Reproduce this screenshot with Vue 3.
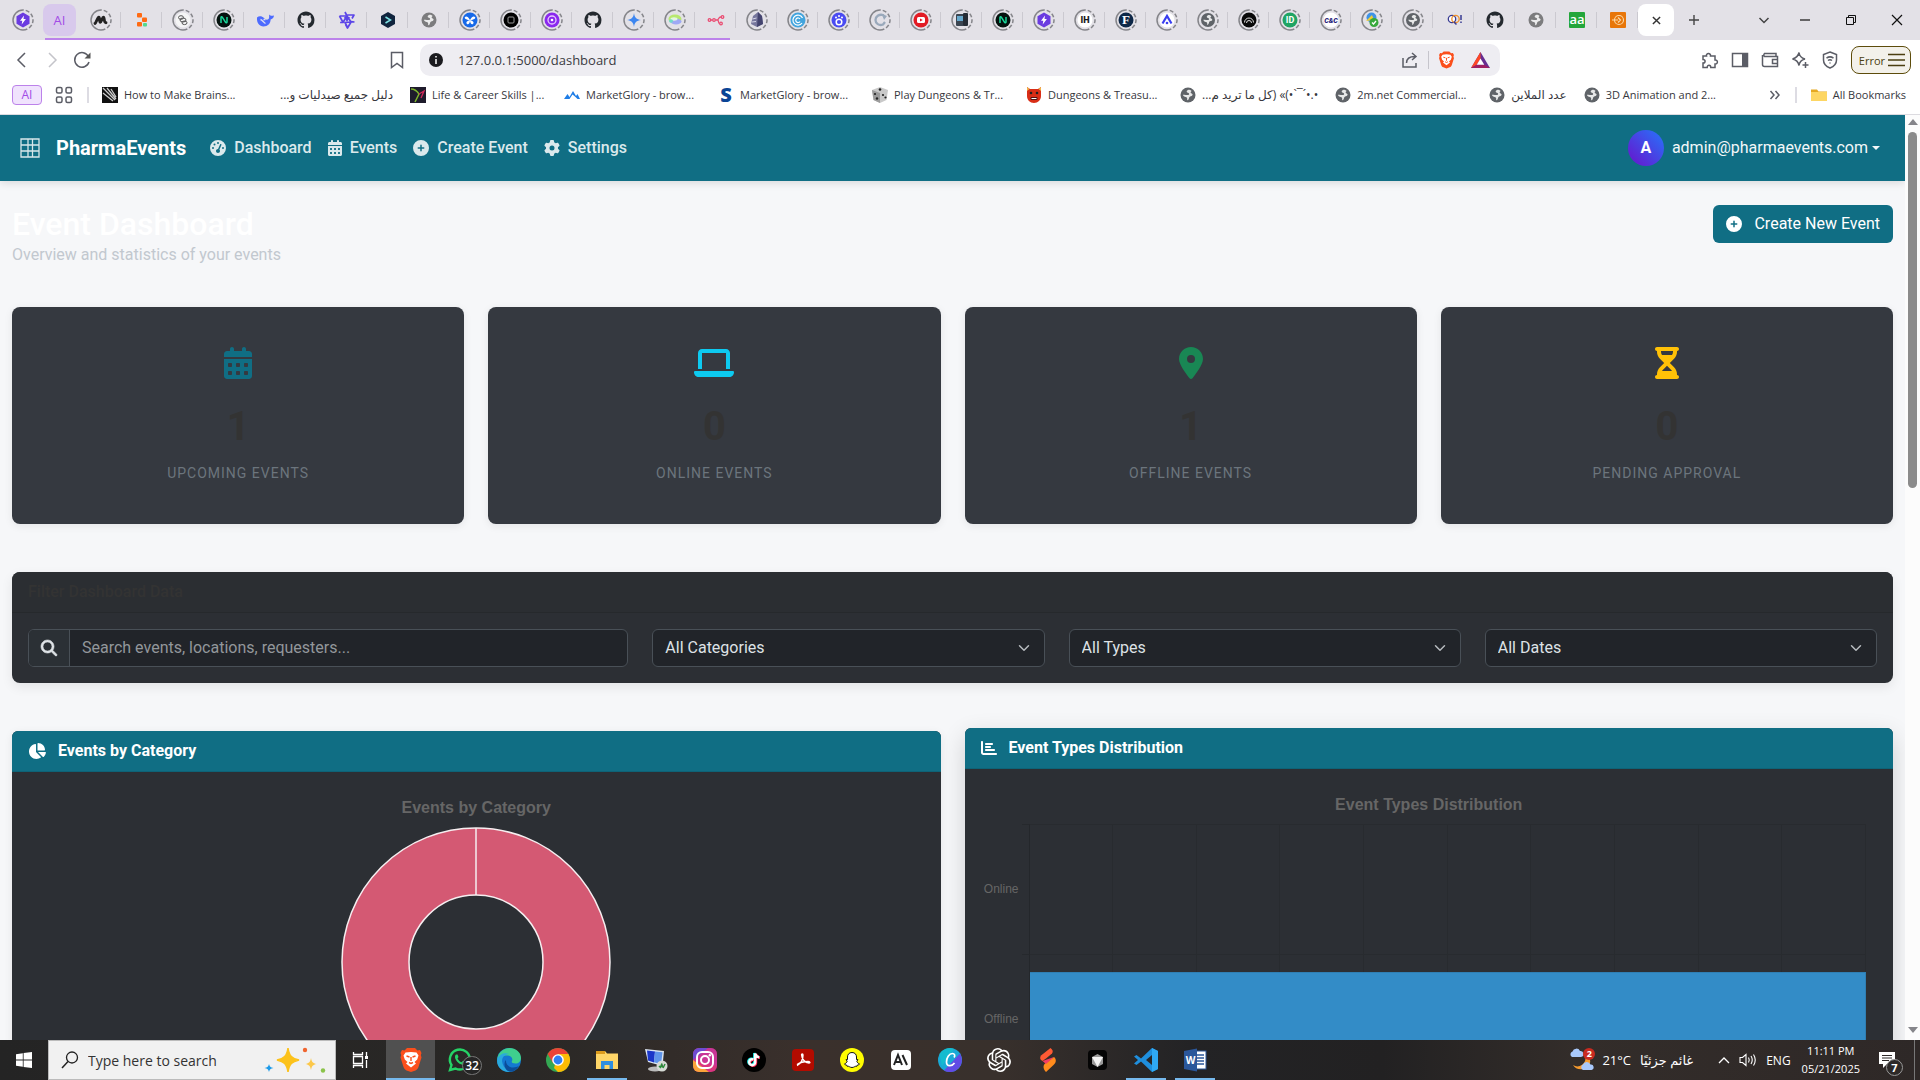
<script setup>
import { ref } from 'vue'

const github = '<path transform="translate(3.5 3.5) scale(1.06)" fill="#24292f" d="M8 0C3.58 0 0 3.58 0 8c0 3.54 2.29 6.53 5.47 7.59.4.07.55-.17.55-.38 0-.19-.01-.82-.01-1.49-2.01.37-2.53-.49-2.69-.94-.09-.23-.48-.94-.82-1.13-.28-.15-.68-.52-.01-.53.63-.01 1.08.58 1.23.82.72 1.21 1.87.87 2.33.66.07-.52.28-.87.51-1.07-1.78-.2-3.64-.89-3.64-3.95 0-.87.31-1.59.82-2.15-.08-.2-.36-1.02.08-2.12 0 0 .67-.21 2.2.82.64-.18 1.32-.27 2-.27s1.36.09 2 .27c1.53-1.04 2.2-.82 2.2-.82.44 1.1.16 1.92.08 2.12.51.56.82 1.27.82 2.15 0 3.07-1.87 3.75-3.65 3.95.29.25.54.73.54 1.48 0 1.07-.01 1.93-.01 2.2 0 .21.15.46.55.38A8.01 8.01 0 0 0 16 8c0-4.42-3.58-8-8-8z"/>'
const globeOf = (c, r) => `<circle cx="12" cy="12" r="${r}" fill="${c}"/><path transform="translate(12 12) scale(${r / 8.2}) translate(-12 -12)" d="M12.5 6.2c-1.5.6-2.3 1.5-1.8 2.6.5.9 2 .7 2.500 1.700.3.900-.5 1.500-1.700 1.500-1.500 0-3.200-.7-5-.2.2 1.500 1.600 2.300 3 2.500 1.200.2 1.700 1 1.600 2.100l-.1 1.400c1.800-.3 2-1.900 2.300-3.100.3-1.100 1.500-1.400 2.700-1.700.9-.3 1.300-1.200.8-2-.6-.8-1.700-.7-1.900-1.700-.1-.8.600-1.200 1.100-1.700-.9-.9-2.200-1.400-3.500-1.400z" fill="#fff" opacity=".85"/>`
const globe = globeOf('#7c7c7e', 7.5)
const globeRing = globeOf('#5f6368', 7)
const globeMark = globeOf('#5f6368', 7.5)
const nuxt = '<circle cx="12" cy="12" r="7.5" fill="#04120e"/><path d="M9 15V9.500c0-.8.900-1 1.300-.4l3.300 5.300c.4.700 1.400.4 1.400-.4V9" fill="none" stroke="#19d89b" stroke-width="1.5"/>'
const bolt = '<path d="M12 4.500l6.500 3.700v7.600L12 19.500l-6.500-3.700V8.200z" fill="#6a3be0"/><path d="M13 7.500l-4 5.300h2.300l-.6 3.700 4.200-5.400h-2.400z" fill="#fff"/>'

const tabIcons = [
  { ring: 1, svg: '<path d="M6 15.500c1.300-.3 2.300-6.300 3.900-6.300 1.200 0 .2 5 1.400 5s1.900-5 3.100-5c1.300 0 .3 5.500 2.600 5.500" fill="none" stroke="#222" stroke-width="2.900" stroke-linecap="round"/>' },
  { svg: '<g><rect x="7" y="5" width="5" height="4.5" rx="1" fill="#ff6a13"/><rect x="12" y="9.5" width="5" height="4.5" rx="1" fill="#ff6a13"/><rect x="7" y="14" width="5" height="4.5" rx="1" fill="#ff6a13"/><rect x="13" y="15" width="4" height="3.5" rx="1" fill="#55d98d"/></g>' },
  { ring: 1, svg: '<circle cx="12" cy="12" r="7.5" fill="#f5f5f5"/><g fill="none" stroke="#555" stroke-width="1"><ellipse cx="10" cy="9.500" rx="2.500" ry="1.800"/><ellipse cx="12" cy="12" rx="3" ry="2"/><ellipse cx="13.500" cy="14.800" rx="2.500" ry="1.800"/></g>' },
  { ring: 1, svg: nuxt },
  { svg: '<path d="M4 9.500c2-2 5-1.500 7 .5 1.500 1.500 3 2.500 4.500 1 1-1 .5-2.700.7-4.500 1.200 1.500 2.500 1.500 4.800 1-.3 2.500-1.800 3.700-3.400 4 0 3.800-2.800 7-7.100 7C6.500 18.500 3.500 15 4 9.500z" fill="#4d6bfe"/><path d="M7.500 11.500c2 .5 3 3 5 4M10.500 11.500h2" stroke="#dcdff5" stroke-width="1.3" fill="none"/>' },
  { svg: github },
  { svg: '<g fill="none" stroke="#5b45e8" stroke-width="1.700" stroke-linejoin="round"><path d="M10 4l1.500 3H19l-2 3.500M19.500 14l-3.300-.3-3.700 6.300-1.900-3.300M4.500 8h7.300M4.500 8l3.600 6.500h-3M8 14.500l3.800-6.500M12 8l4 6M16 14l-6 .5 2 4"/></g><path d="M9 9h6l-3 5z" fill="#5b45e8"/>' },
  { svg: '<path d="M12 4l7 4v8l-7 4-7-4V8z" fill="#10243e"/><path d="M9.500 9l5 3-5 3" fill="none" stroke="#7fe3e6" stroke-width="1.500"/>' },
  { svg: globe },
  { ring: 1, svg: '<circle cx="12" cy="12" r="7.5" fill="#1769e8"/><path d="M12 12C10 8 8 8 7 9s1 3 5 3zm0 0c2-4 4-4 5-3s-1 3-5 3zm0 0c-4 1-4 3-3 4s3 0 3-4zm0 0c4 1 4 3 3 4s-3 0-3-4z" fill="#fff"/>' },
  { ring: 1, svg: '<circle cx="12" cy="12" r="7.5" fill="#000"/><rect x="9" y="9" width="6" height="6" rx="1" fill="none" stroke="#999" stroke-width="1"/>' },
  { ring: 1, svg: '<circle cx="12" cy="12" r="7.5" fill="#8a28ee"/><circle cx="12" cy="12" r="4" fill="none" stroke="#e7c8ff" stroke-width="1.300"/><circle cx="12" cy="12" r="1.300" fill="#fff"/>' },
  { svg: github },
  { ring: 1, svg: '<path d="M12 5c.5 4.500 2.500 6.500 7 7-4.500.5-6.500 2.500-7 7-.5-4.500-2.500-6.500-7-7 4.500-.5 6.500-2.500 7-7z" fill="#3d86f0"/>' },
  { ring: 1, svg: '<ellipse cx="12" cy="11" rx="6.5" ry="4.5" fill="#b8e86f"/><ellipse cx="13" cy="13.5" rx="5.5" ry="3" fill="#9fa9f5"/><ellipse cx="11" cy="11" rx="3.5" ry="1.7" fill="#e4f6e0"/><ellipse cx="8" cy="13" rx="2" ry="1.8" fill="#6fdcc9"/>' },
  { svg: '<g fill="none" stroke="#ea4b71" stroke-width="1.300"><circle cx="5.500" cy="12" r="1.300"/><circle cx="10" cy="12" r="1.300"/><circle cx="18.500" cy="9" r="1.300"/><circle cx="17" cy="15.500" r="1.300"/><path d="M7 12h1.500M11.500 12h1.500c2 0 1-3 4-3M13.500 12c1.500 0 .5 3.500 2 3.500"/></g>' },
  { ring: 1, svg: '<path d="M6 16l2-8 5-4 4 4 1 8-6 3z" fill="#77779d"/><path d="M13 4l4 4 1 8-6 3z" fill="#44446f"/><path d="M7.500 11l4-1M7 14l4-.5" stroke="#d5d5e8"/>' },
  { ring: 1, svg: '<circle cx="12" cy="12" r="7.5" fill="#42a4dd"/><path d="M16.500 10A5 5 0 1 0 16 15M14 11a2.300 2.300 0 1 0 0 2.500" fill="none" stroke="#fff" stroke-width="1.200"/>' },
  { ring: 1, svg: '<circle cx="12" cy="12" r="7.5" fill="#4a4bf2"/><circle cx="12" cy="14" r="2.800" fill="none" stroke="#fff" stroke-width="1.500"/><g fill="#fff"><circle cx="9" cy="9.500" r="1"/><circle cx="12" cy="8" r="1"/><circle cx="15" cy="9.500" r="1"/></g>' },
  { ring: 1, svg: '<path d="M17 9.500l-2-2.500c-4-1-7.500 1.500-7.500 5s3.500 6 7.500 4.500l2-2.500" fill="none" stroke="#9aa9bb" stroke-width="2.300"/><path d="M14 6l5 2-3 4z" fill="#9aa9bb"/>' },
  { ring: 1, svg: '<circle cx="12" cy="12" r="7.5" fill="#e21b24"/><rect x="8" y="9" width="8" height="6" rx="1.5" fill="#fff"/><path d="M11 10.500l2.800 1.500-2.800 1.500z" fill="#e21b24"/>' },
  { ring: 1, svg: '<rect x="6" y="6" width="8" height="12" rx="1" fill="#3b4551"/><rect x="13" y="5" width="5" height="13" rx="1" fill="#252c35"/><rect x="7" y="8" width="6" height="5" fill="#67a9cd"/>' },
  { ring: 1, svg: nuxt },
  { ring: 1, svg: bolt },
  { ring: 1, svg: '<circle cx="12" cy="12" r="7.5" fill="#fff"/><text x="12" y="15" text-anchor="middle" font-family="Roboto, sans-serif" font-weight="900" font-size="9" fill="#1c1c1c">IH</text>' },
  { ring: 1, svg: '<circle cx="12" cy="12" r="7.5" fill="#0d2747"/><text x="12" y="16" text-anchor="middle" font-family="Liberation Serif, serif" font-weight="700" font-size="13" fill="#fff">F</text>' },
  { ring: 1, svg: '<circle cx="12" cy="12" r="7.5" fill="#fff"/><path d="M7.500 15.500L12 8l4.500 7.500" fill="none" stroke="#3a3ff0" stroke-width="2.200"/><circle cx="12" cy="15" r="1.300" fill="#3a3ff0"/>' },
  { ring: 1, svg: globeRing },
  { ring: 1, svg: '<circle cx="12" cy="12" r="7.5" fill="#0a0a0a"/><path d="M7.500 14.500a4.500 4.500 0 0 1 9 0M9.500 15a2.500 2.500 0 0 1 5 0" fill="none" stroke="#ddd" stroke-width="1"/>' },
  { ring: 1, svg: '<circle cx="12" cy="12" r="7.5" fill="#1fa463"/><text x="12" y="15" text-anchor="middle" font-family="Roboto, sans-serif" font-weight="700" font-size="9" fill="#fff">ID</text>' },
  { ring: 1, svg: '<circle cx="12" cy="12" r="7.5" fill="#fff"/><text x="12" y="14.5" text-anchor="middle" font-family="Roboto, sans-serif" font-style="italic" font-weight="900" font-size="7" fill="#27217a">C&amp;C</text>' },
  { ring: 1, svg: '<circle cx="11.500" cy="9.500" r="5" fill="#3f93e6"/><path d="M6 13l6-6 2 5z" fill="#f3cf32"/><circle cx="14" cy="14.500" r="4.500" fill="#37a93c"/><path d="M12 14.500l1.500 1.500 2.500-3" fill="none" stroke="#fff" stroke-width="1.300"/>' },
  { ring: 1, svg: globeRing },
  { svg: '<circle cx="10" cy="11" r="3.700" fill="#fff" stroke="#383b93" stroke-width="1.300"/><circle cx="13.500" cy="11" r="3.700" fill="none" stroke="#f0912c" stroke-width="1.300"/><path d="M12 14l2.500 2.500" stroke="#383b93" stroke-width="1.500"/><path d="M19 7v5M19 13.500v1.500" stroke="#383b93" stroke-width="1.500"/>' },
  { svg: github },
  { svg: globe },
  { svg: '<rect x="4" y="4" width="16" height="16" rx="1" fill="#23a63b"/><text x="12" y="16" text-anchor="middle" font-family="Open Sans, sans-serif" font-weight="600" font-size="13" fill="#fff">aa</text>' },
  { svg: '<rect x="4" y="4" width="16" height="16" rx="1" fill="#e87609"/><circle cx="13" cy="12" r="4.500" fill="none" stroke="#fbd9a7" stroke-width="1.100"/><path d="M6 12h6M12 9.500l2.500 2.500-2.500 2.500" fill="none" stroke="#fbd9a7" stroke-width="1.200"/>' }
]
const groupTabs = tabIcons.slice(0, 16)
const restTabs = tabIcons.slice(16)

const bookmarks = [
  { t: 'How to Make Brains...', svg: '<rect x="4" y="4" width="16" height="16" fill="#111"/><path d="M5 5l12 12M9 5l9 11M5 10l10 8M13 6l5 8" stroke="#ccc" stroke-width="1.300"/>' },
  { t: 'دليل جميع صيدليات و...', rtl: 1, svg: '' },
  { t: 'Life & Career Skills |...', svg: '<rect x="4" y="4" width="16" height="16" fill="#1e1b2b"/><path d="M5 6c4 0 6 2 8 5l-4 8" fill="none" stroke="#7db52c" stroke-width="1.500"/><path d="M13 11l5-3-3 7" fill="none" stroke="#d1295a" stroke-width="1.300"/>' },
  { t: 'MarketGlory - brow...', svg: '<path d="M4 16l3.500-5 2 3L13 8l3 5 1.500-2L20 16h-2.500l-2-2-3-2.500-3 4.500z" fill="#1f7de6"/>' },
  { t: 'MarketGlory - brow...', svg: '<text x="12" y="19" text-anchor="middle" font-family="Open Sans, sans-serif" font-weight="800" font-size="20" fill="#0b4495">S</text>' },
  { t: 'Play Dungeons & Tr...', svg: '<path d="M4 7l8-3 8 3-1.500 10L12 20l-6.500-3z" fill="#c9c9c9"/><path d="M4 7l8 3v10l-6.500-3z" fill="#9b9b9b"/><g fill="#222"><circle cx="12" cy="6.500" r="1.300"/><circle cx="7" cy="11" r="1.100"/><circle cx="9" cy="15.500" r="1.200"/><circle cx="15" cy="12" r="1.100"/><circle cx="17.500" cy="14.500" r="1.100"/></g>' },
  { t: 'Dungeons & Treasu...', svg: '<path d="M5 4l3 2h8l3-2v9c0 4-3 7-7 7s-7-3-7-7z" fill="#d92e17"/><path d="M5 4l2.500 2L5 8zM19 4l-2.500 2L19 8z" fill="#f0b64b"/><circle cx="9" cy="10" r="1.300" fill="#222"/><circle cx="15" cy="10" r="1.300" fill="#222"/><path d="M9 14.500h6v2H9z" fill="#fff" stroke="#551010"/>' },
  { t: '•.•´¯`•)» (كل ما تريد م...', rtl: 1, svg: globeMark },
  { t: '2m.net Commercial...', svg: globeMark },
  { t: 'عدد الملاين', rtl: 1, short: 1, svg: globeMark },
  { t: '3D Animation and 2...', svg: globeMark }
]

const calendar = { box: '0 0 448 512', d: 'M128 0c17.7 0 32 14.3 32 32V64H288V32c0-17.7 14.3-32 32-32s32 14.3 32 32V64h48c26.5 0 48 21.5 48 48v48H0V112C0 85.5 21.5 64 48 64H96V32c0-17.7 14.3-32 32-32zM0 192H448V464c0 26.5-21.5 48-48 48H48c-26.5 0-48-21.5-48-48V192zm64 80v32c0 8.8 7.2 16 16 16h32c8.8 0 16-7.2 16-16V272c0-8.8-7.2-16-16-16H80c-8.8 0-16 7.2-16 16zm128 0v32c0 8.8 7.2 16 16 16h32c8.8 0 16-7.2 16-16V272c0-8.8-7.2-16-16-16H208c-8.8 0-16 7.2-16 16zm144-16c-8.8 0-16 7.2-16 16v32c0 8.8 7.2 16 16 16h32c8.8 0 16-7.2 16-16V272c0-8.8-7.2-16-16-16H336zM64 400v32c0 8.8 7.2 16 16 16h32c8.8 0 16-7.2 16-16V400c0-8.8-7.2-16-16-16H80c-8.8 0-16 7.2-16 16zm144-16c-8.8 0-16 7.2-16 16v32c0 8.8 7.2 16 16 16h32c8.8 0 16-7.2 16-16V400c0-8.8-7.2-16-16-16H208zm112 16v32c0 8.8 7.2 16 16 16h32c8.8 0 16-7.2 16-16V400c0-8.8-7.2-16-16-16H336c-8.8 0-16 7.2-16 16z' }
const plus = { box: '0 0 512 512', d: 'M256 512A256 256 0 1 0 256 0a256 256 0 1 0 0 512zM232 344V280H168c-13.3 0-24-10.7-24-24s10.7-24 24-24h64V168c0-13.3 10.7-24 24-24s24 10.7 24 24v64h64c13.3 0 24 10.7 24 24s-10.7 24-24 24H280v64c0 13.3-10.7 24-24 24s-24-10.7-24-24z' }
const gauge = { box: '0 0 512 512', d: 'M0 256a256 256 0 1 1 512 0A256 256 0 1 1 0 256zM288 96a32 32 0 1 0-64 0 32 32 0 1 0 64 0zM256 416c35.3 0 64-28.7 64-64 0-17.4-6.9-33.1-18.1-44.6L366 161.7c5.3-12.1-.2-26.3-12.3-31.6s-26.3.2-31.6 12.3L257.9 288H256c-35.3 0-64 28.7-64 64s28.7 64 64 64zM176 144a32 32 0 1 0-64 0 32 32 0 1 0 64 0zM96 288a32 32 0 1 0 0-64 32 32 0 1 0 0 64zm352-32a32 32 0 1 0-64 0 32 32 0 1 0 64 0z' }
const gear = { box: '0 0 512 512', d: 'M495.9 166.6c3.2 8.7 .5 18.4-6.4 24.6l-43.3 39.4c1.1 8.3 1.7 16.8 1.7 25.4s-.6 17.1-1.7 25.4l43.3 39.4c6.9 6.2 9.6 15.9 6.4 24.6c-4.4 11.9-9.7 23.3-15.8 34.3l-4.7 8.1c-6.6 11-14 21.4-22.1 31.2c-5.9 7.2-15.7 9.6-24.5 6.8l-55.7-17.7c-13.4 10.3-28.2 18.9-44 25.4l-12.5 57.1c-2 9.1-9 16.3-18.2 17.8c-13.8 2.3-28 3.5-42.5 3.5s-28.7-1.2-42.5-3.5c-9.2-1.5-16.2-8.7-18.2-17.8l-12.5-57.1c-15.8-6.5-30.6-15.1-44-25.4L83.1 425.9c-8.8 2.8-18.6 .3-24.5-6.8c-8.1-9.8-15.5-20.2-22.1-31.2l-4.7-8.1c-6.1-11-11.4-22.4-15.8-34.3c-3.2-8.7-.5-18.4 6.4-24.6l43.3-39.4C64.6 273.1 64 264.6 64 256s.6-17.1 1.7-25.4L22.4 191.2c-6.9-6.2-9.6-15.9-6.4-24.6c4.4-11.9 9.7-23.3 15.8-34.3l4.7-8.1c6.6-11 14-21.4 22.1-31.2c5.9-7.2 15.7-9.6 24.5-6.8l55.7 17.7c13.4-10.3 28.2-18.9 44-25.4l12.5-57.1c2-9.1 9-16.3 18.2-17.8C227.3 1.2 241.5 0 256 0s28.7 1.2 42.5 3.5c9.2 1.5 16.2 8.7 18.2 17.8l12.5 57.1c15.8 6.5 30.6 15.1 44 25.4l55.7-17.7c8.8-2.8 18.6-.3 24.5 6.8c8.1 9.8 15.5 20.2 22.1 31.2l4.7 8.1c6.1 11 11.4 22.4 15.8 34.3zM256 336a80 80 0 1 0 0-160 80 80 0 1 0 0 160z' }

const navLinks = [
  { t: 'Dashboard', ...gauge },
  { t: 'Events', ...calendar },
  { t: 'Create Event', ...plus },
  { t: 'Settings', ...gear }
]

const stats = [
  { n: 1, t: 'Upcoming Events', c: '#106e84', ...calendar },
  { n: 0, t: 'Online Events', c: '#0dcaf0', box: '0 0 640 512', d: 'M128 32C92.7 32 64 60.7 64 96V352h64V96H512V352h64V96c0-35.3-28.7-64-64-64H128zM19.2 384C8.6 384 0 392.6 0 403.2C0 445.6 34.4 480 76.8 480H563.2c42.4 0 76.8-34.4 76.8-76.8c0-10.6-8.6-19.2-19.2-19.2H19.2z' },
  { n: 1, t: 'Offline Events', c: '#198754', box: '0 0 384 512', d: 'M215.7 499.2C267 435 384 279.4 384 192C384 86 298 0 192 0S0 86 0 192c0 87.4 117 243 168.3 307.2c12.3 15.3 35.1 15.3 47.4 0zM192 128a64 64 0 1 1 0 128 64 64 0 1 1 0-128z' },
  { n: 0, t: 'Pending Approval', c: '#ffc107', box: '0 0 384 512', d: 'M32 0C14.3 0 0 14.3 0 32S14.3 64 32 64V75c0 42.4 16.9 83.1 46.9 113.1L146.7 256 78.9 323.9C48.9 353.9 32 394.6 32 437v11c-17.7 0-32 14.3-32 32s14.3 32 32 32H64 320h32c17.7 0 32-14.3 32-32s-14.3-32-32-32V437c0-42.4-16.9-83.1-46.9-113.1L237.3 256l67.9-67.9c30-30 46.9-70.7 46.9-113.1V64c17.7 0 32-14.3 32-32s-14.3-32-32-32H320 64 32zM96 75V64H288V75c0 19-5.6 37.4-16 53H112c-10.3-15.6-16-34-16-53zm16 309c3.5-5.3 7.6-10.3 12.1-14.9L192 301.3l67.9 67.9c4.6 4.6 8.6 9.6 12.1 14.9H112z' }
]

const filters = [
  { id: 'category', t: 'All Categories', label: 'Category' },
  { id: 'type', t: 'All Types', label: 'Type' },
  { id: 'date', t: 'All Dates', label: 'Date' }
]

const braveLion = '<path d="M8 0h8l2.500 2.500L21 2l1.500 3-.7 2 .7 2.500-3 9.500c-.5 1.600-1.500 2.500-3 3.400L12 24l-4.500-1.600c-1.500-.9-2.500-1.800-3-3.400l-3-9.500.7-2.500-.7-2L3 2l2.500.5z" fill="#fb4f1c"/><path d="M12 4l5.500.5 2 3-1.300 4-2.700 2.500 1.500 1.500L12 19.500 7 15.500 8.500 14 5.800 11.500l-1.300-4 2-3z" fill="#fff"/><path d="M7.500 8l3 1M16.500 8l-3 1M12 9v4M10 14.500l2 1 2-1" stroke="#fb4f1c" stroke-width="1.400" fill="none"/>'

const apps = [
  { name: 'Brave', on: 'full', svg: braveLion },
  { name: 'WhatsApp', badge: '32', svg: '<path d="M2 22l1.500-5A10 10 0 1 1 7.500 20.500z" fill="none" stroke="#25d366" stroke-width="2.400"/><path d="M8 6.500l1.500 0 1 2.500-1 1.500c1 2 2.500 3.200 4 3.800l1.500-1.500 2.500 1.200c0 2-1.500 3-3 2.800C10.500 16 7 12 7 9c0-1 .4-2 1-2.500z" fill="#25d366"/>' },
  { name: 'Edge', svg: '<circle cx="12" cy="12" r="12" fill="#1479d1"/><path d="M.2 11C1.500 4 6.500 0 12.500 0 19 0 24 4.500 24 10c0 3.500-2.500 5.500-5.500 5.500-3 0-4.500-1-3.500-2.500 1-2-.2-5-4-5.500C6.500 7 2.500 8.500.2 11z" fill="#3fcf8e"/><path d="M.2 11C2.500 5.500 8 4 12 6c-5 .5-7.500 4-6.800 8C6 19 10 23 15 23.500 7 25.500-1 20 .2 11z" fill="#2aa9dd"/><path d="M9 12c-.5 4 2.500 7.500 7 7.500 2.500 0 4.500-.7 6-1.700-2 3.700-5 5.700-8.500 6C7.500 23 6 15 9 12z" fill="#0c4d98"/>' },
  { name: 'Chrome', svg: '<circle cx="12" cy="12" r="12" fill="#34a853"/><path d="M12 12l10.400-6A12 12 0 0 1 12 24z" fill="#fbbc05"/><path d="M12 6h10.400l-5 9L12 24 8 20z" fill="#fbbc05"/><path d="M1.600 6A12 12 0 0 1 22.400 6H12l-5 9z" fill="#ea4335"/><circle cx="12" cy="12" r="5.800" fill="#fff"/><circle cx="12" cy="12" r="4.400" fill="#2d7ff3"/>' },
  { name: 'File Explorer', on: 'part', svg: '<path d="M1 3h9l2 2.500h11V21H1z" fill="#ffd668"/><path d="M1 3h9v3H1z" fill="#dd9c1d"/><path d="M6 13h12v8h-3.500v-4h-5v4H6z" fill="#2f8ee0"/>' },
  { name: 'Remote Desktop', svg: '<path d="M1 1l19 2-1.500 15L4 14z" fill="#dce5f2"/><path d="M3 2.500l8 1-1 11-6-2z" fill="#1b37c9"/><path d="M11 3.500l7.500.8-1.500 12-7-2z" fill="#5f95ea"/><ellipse cx="11" cy="21" rx="7" ry="2.500" fill="#bbb"/><circle cx="18" cy="18" r="5.500" fill="#d6dbd5"/><path d="M15 18l2 2M18 15.500l-1 2.500 2 1M21 16l-2 4" stroke="#2b8f3b" stroke-width="1.500"/>' },
  { name: 'Instagram', svg: '<rect width="24" height="24" rx="6" fill="#d9357f"/><path d="M0 12V6a6 6 0 0 1 6-6h9z" fill="#6e4bd0"/><path d="M0 12v6a6 6 0 0 0 6 6h10z" fill="#fba43a"/><path d="M15 0h3a6 6 0 0 1 6 6v12L0 12z" fill="#b935ad" opacity=".5"/><rect x="4" y="4" width="16" height="16" rx="5" fill="none" stroke="#fff" stroke-width="2"/><circle cx="12" cy="12" r="4" fill="none" stroke="#fff" stroke-width="2"/><circle cx="16.800" cy="7.200" r="1.200" fill="#fff"/>' },
  { name: 'TikTok', svg: '<circle cx="12" cy="12" r="12" fill="#000"/><g fill="none" stroke-width="2.400"><path d="M11.500 11.500a3 3 0 1 0 1.700 3V5.500c.5 2.500 2 3.500 4 3.700" transform="translate(-.9 -.6)" stroke="#25f4ee"/><path d="M11.500 11.500a3 3 0 1 0 1.700 3V5.500c.5 2.500 2 3.500 4 3.700" transform="translate(.8 .6)" stroke="#fe2c55"/><path d="M11.500 11.500a3 3 0 1 0 1.700 3V5.500c.5 2.500 2 3.500 4 3.700" stroke="#fff"/></g>' },
  { name: 'Acrobat', svg: '<rect x="1" y="1" width="22" height="22" rx="4" fill="#b30b00"/><path d="M6 17.500c4-2 6-6 6-10.500 0-1.500-1.500-1.500-1.400 0 .3 4 3.400 8 7.400 8 1.500 0 1-1.500-1-1.500-4 0-8 1-11 3" fill="none" stroke="#fff" stroke-width="1.400"/>' },
  { name: 'Snapchat', svg: '<circle cx="12" cy="12" r="12" fill="#fffc00"/><path d="M12 4.500c3 0 4.500 2 4.500 4.500v2.500l1.500.2-1.200 1.500c.5 1.500 1.500 2.300 2.700 2.700-.3 1-1.500 1-2.200 1.200l-.5 1.200c-1.800-.5-2.500 1.200-4.800 1.200s-3-1.700-4.800-1.200l-.5-1.200c-.7-.2-1.900-.2-2.200-1.200 1.200-.4 2.200-1.200 2.700-2.700L6 11.700l1.500-.2V9c0-2.500 1.500-4.500 4.500-4.500z" fill="#fff" stroke="#111" stroke-width="1"/>' },
  { name: 'Anthropic', svg: '<rect x="2" y="2" width="20" height="20" rx="4" fill="#fff"/><path d="M5 17l4-10 4 10M6.500 14h5M13.500 7l4.500 10" fill="none" stroke="#222" stroke-width="2"/>' },
  { name: 'Canva', svg: '<circle cx="12" cy="12" r="12" fill="#19a9d6"/><path d="M22 5.500A12 12 0 0 1 6 22.500z" fill="#6f3be8" opacity=".85"/><path d="M1.500 6A12 12 0 0 1 16 .7L4 18z" fill="#13c3cc" opacity=".7"/><path d="M16 9.500c1.500-2 .5-4-1.500-4-3.500 0-6 4.500-6 8.500 0 5 5.500 4.500 8 1" fill="none" stroke="#fff" stroke-width="1.700"/>' },
  { name: 'ChatGPT', svg: '<path fill="#fff" d="M22.2819 9.8211a5.9847 5.9847 0 0 0-.5157-4.9108 6.0462 6.0462 0 0 0-6.5098-2.9A6.0651 6.0651 0 0 0 4.9807 4.1818a5.9847 5.9847 0 0 0-3.9977 2.9 6.0462 6.0462 0 0 0 .7427 7.0966 5.98 5.98 0 0 0 .511 4.9107 6.051 6.051 0 0 0 6.5146 2.9001A5.9847 5.9847 0 0 0 13.2599 24a6.0557 6.0557 0 0 0 5.7718-4.2058 5.9894 5.9894 0 0 0 3.9977-2.9001 6.0557 6.0557 0 0 0-.7475-7.0729zm-9.022 12.6081a4.4755 4.4755 0 0 1-2.8764-1.0408l.1419-.0804 4.7783-2.7582a.7948.7948 0 0 0 .3927-.6813v-6.7369l2.02 1.1686a.071.071 0 0 1 .038.052v5.5826a4.504 4.504 0 0 1-4.4945 4.4944zm-9.6607-4.1254a4.4708 4.4708 0 0 1-.5346-3.0137l.142.0852 4.783 2.7582a.7712.7712 0 0 0 .7806 0l5.8428-3.3685v2.3324a.0804.0804 0 0 1-.0332.0615L9.74 19.9502a4.4992 4.4992 0 0 1-6.1408-1.6464zM2.3408 7.8956a4.485 4.485 0 0 1 2.3655-1.9728V11.6a.7664.7664 0 0 0 .3879.6765l5.8144 3.3543-2.0201 1.1685a.0757.0757 0 0 1-.071 0l-4.8303-2.7865A4.504 4.504 0 0 1 2.3408 7.872zm16.5963 3.8558L13.1038 8.364 15.1192 7.2a.0757.0757 0 0 1 .071 0l4.8303 2.7913a4.4944 4.4944 0 0 1-.6765 8.1042v-5.6772a.79.79 0 0 0-.407-.667zm2.0107-3.0231l-.142-.0852-4.7735-2.7818a.7759.7759 0 0 0-.7854 0L9.409 9.2297V6.8974a.0662.0662 0 0 1 .0284-.0615l4.8303-2.7866a4.4992 4.4992 0 0 1 6.6802 4.66zM8.3065 12.863l-2.02-1.1638a.0804.0804 0 0 1-.038-.0567V6.0742a4.4992 4.4992 0 0 1 7.3757-3.4537l-.142.0805L8.704 5.459a.7948.7948 0 0 0-.3927.6813zm1.0976-2.3654l2.602-1.4998 2.6069 1.4998v2.9994l-2.5974 1.4997-2.6067-1.4997Z"/>' },
  { name: 'Flame', svg: '<path d="M14.500 0L5 7.500c-1.500 2-1 4.500 1.500 5.500l3.500-2.500 6-5c1.500-2 .5-4-1.500-5.500z" fill="#ff5a34"/><path d="M18 9L9 15.500c-2.500 2.500-1.500 6 1 8.500l7.500-7c3-2.500 3-6 .5-8z" fill="#ff8b1c"/><path d="M6.500 13L18 9l-8 7z" fill="#f33c65"/>' },
  { name: 'Cursor', svg: '<rect x="3" y="2" width="19" height="20" rx="4" fill="#050505"/><path d="M12.500 6l5.500 3v7l-5.500 3L7 16V9z" fill="#999"/><path d="M7 9h11l-5.500 10z" fill="#f3f3f3"/>' },
  { name: 'VS Code', on: 'part', svg: '<path d="M18 0l6 3v18l-6 3L7 13.500 2.500 17 0 15.500 4 12 0 8.500 2.500 7 7 10.500zM18 7l-6 5 6 5z" fill="#1f8fdd"/><path d="M18 0l6 3v18l-6 3z" fill="#2fa9f4"/>' },
  { name: 'Word', on: 'part', svg: '<rect x="11" y="3" width="12" height="18" fill="#fff" stroke="#2b579a"/><path d="M14 7h7M14 10h7M14 13h7M14 16h7" stroke="#2b579a" stroke-width="1.400"/><path d="M1 3l13-2.500v23L1 21z" fill="#2b579a"/><text x="7.5" y="16" text-anchor="middle" font-family="Open Sans, sans-serif" font-weight="700" font-size="10" fill="#fff">W</text>' }
]

const url = ref('127.0.0.1:5000/dashboard')
</script>

<template>
  <div class="desktop">
    <header class="browser">
      <div class="tabs">
        <button class="tab first" aria-label="Tab"><svg viewBox="0 0 24 24"><circle cx="12" cy="12" r="10" class="ring" /><g v-html="bolt" /></svg></button>
        <div class="group">
          <button class="chip">AI</button>
          <button v-for="(t, i) in groupTabs" :key="i" class="tab" aria-label="Tab"><svg viewBox="0 0 24 24"><circle v-if="t.ring" cx="12" cy="12" r="10" class="ring" /><g v-html="t.svg" /></svg></button>
        </div>
        <button v-for="(t, i) in restTabs" :key="i" class="tab" aria-label="Tab"><svg viewBox="0 0 24 24"><circle v-if="t.ring" cx="12" cy="12" r="10" class="ring" /><g v-html="t.svg" /></svg></button>
        <button class="active-tab" aria-label="Close tab"><svg viewBox="0 0 10 10" width="9" height="9"><path d="M1 1l8 8M9 1l-8 8" stroke="#333" stroke-width="1.6" /></svg></button>
        <button class="new-tab" aria-label="New tab"><svg viewBox="0 0 12 12" width="12" height="12"><path d="M6 1v10M1 6h10" stroke="#444" stroke-width="1.4" /></svg></button>
        <div class="window-controls">
          <button aria-label="Search tabs"><svg viewBox="0 0 12 12" width="12" height="12"><path d="M1.500 4L6 8.500 10.500 4" fill="none" stroke="#444" stroke-width="1.5" /></svg></button>
          <button aria-label="Minimize"><svg viewBox="0 0 12 12" width="12" height="12"><path d="M1 6h10" stroke="#111" stroke-width="1.2" /></svg></button>
          <button aria-label="Restore"><svg viewBox="0 0 12 12" width="12" height="12"><path d="M1.500 3.500h7v7h-7zM3.500 3.500v-2h7v7h-2" fill="none" stroke="#111" /></svg></button>
          <button aria-label="Close"><svg viewBox="0 0 12 12" width="12" height="12"><path d="M1 1l10 10M11 1L1 11" stroke="#111" stroke-width="1.2" /></svg></button>
        </div>
      </div>

      <div class="toolbar">
        <div class="tool-left">
          <button aria-label="Back"><svg viewBox="0 0 18 18" width="18" height="18"><path d="M12 2L5 9l7 7" class="line" /></svg></button>
          <button aria-label="Forward"><svg viewBox="0 0 18 18" width="18" height="18"><path d="M6 2l7 7-7 7" class="line faint" /></svg></button>
          <button aria-label="Reload"><svg viewBox="0 0 18 18" width="18" height="18"><path d="M15.500 5.500A7.300 7.300 0 1 0 16 11" class="line" /><path d="M17.500 1.500v6h-6z" fill="#555" /></svg></button>
        </div>
        <button class="save" aria-label="Bookmark"><svg viewBox="0 0 18 18" width="18" height="18"><path d="M3.500 1.500h11v15L9 12.500l-5.500 4z" class="line" /></svg></button>
        <div class="address">
          <svg viewBox="0 0 14 14" width="14" height="14"><circle cx="7" cy="7" r="7" fill="#1b1b1f" /><path d="M7 6v5M7 3v1.600" stroke="#fff" stroke-width="1.5" /></svg>
          <input v-model="url" type="text" aria-label="Address" />
          <svg viewBox="0 0 18 18" width="18" height="18"><path d="M2 7v9h13v-4M5.500 12c0-4 3-6.500 8.500-6.500M11 2l4 3.500L11 9" class="line" /></svg>
          <i class="bar"></i>
          <svg viewBox="0 0 24 24" width="17" height="18" v-html="braveLion"></svg>
          <svg class="bat" viewBox="0 0 20 18" width="19" height="17"><path d="M10 0l10 17H0z" fill="#662d91" /><path d="M10 0L0 17l6-3.500 4-6.500z" fill="#ff4724" /><path d="M0 17h20l-6-3.500H6z" fill="#9e1f63" /><path d="M10 7l4 6.500H6z" fill="#fff" /></svg>
        </div>
        <div class="extensions">
          <svg viewBox="0 0 18 18" width="18" height="18"><path d="M2 5h3.500c-.8-3 4.500-3.500 4 0H14v4c3.200-.3 3.200 4.200 0 4v3.500h-4.200c0-3-3.600-3-3.600 0H2V12c2.800 0 2.800-3.600 0-3.600z" class="line" /></svg>
          <svg viewBox="0 0 18 18" width="18" height="18"><path d="M1.500 2.500h15v13h-15z" class="line" /><path d="M11 2h6v14h-6z" fill="#5b5d66" /></svg>
          <svg viewBox="0 0 18 18" width="18" height="18"><path d="M15 5V2.500H3.500a2 2 0 0 0 0 3h13v10h-13a2 2 0 0 1-2-2V4M16.500 8.500h-5v4h5" class="line" /></svg>
          <svg viewBox="0 0 18 18" width="18" height="18"><path d="M8 1.500c.5 4 2 5.500 6 6.500-4 .8-5.500 2.300-6 6.500-.8-4.200-2.500-5.700-6.500-6.500 4-1 5.700-2.500 6.500-6.500zM14.500 11v6M11.500 14h6" class="line" /></svg>
          <svg viewBox="0 0 18 18" width="18" height="18"><path d="M9 1l6.500 2.500V9c0 4-2.500 6.500-6.500 8-4-1.500-6.500-4-6.500-8V3.500zM5.500 7.200c2-1.500 5-1.500 7 0M7 9.500c1.200-1 2.800-1 4 0M8.500 12h1" class="line" /></svg>
          <button class="error">Error<svg viewBox="0 0 17 14" width="17" height="14"><path d="M0 1.500h17M0 7h17M0 12.500h17" stroke="#4b3f10" stroke-width="1.5" /></svg></button>
        </div>
      </div>

      <nav class="bookmarks" aria-label="Bookmarks">
        <button class="ai">AI</button>
        <svg class="apps" viewBox="0 0 18 18" width="18" height="18"><g class="line"><rect x="1.500" y="1.500" width="5.500" height="5.500" rx="1.500" /><rect x="11" y="1.500" width="5.500" height="5.500" rx="1.500" /><rect x="1.500" y="11" width="5.500" height="5.500" rx="1.500" /><rect x="11" y="11" width="5.500" height="5.500" rx="1.500" /></g></svg>
        <i class="bar"></i>
        <a v-for="(b, i) in bookmarks" :key="i" href="#" :class="{ short: b.short }"><svg viewBox="4 4 16 16" width="16" height="16" v-html="b.svg"></svg><span :dir="b.rtl ? 'rtl' : 'ltr'">{{ b.t }}</span></a>
        <div class="all">
          <svg viewBox="0 0 12 12" width="12" height="12"><path d="M1.500 2L5 6l-3.500 4M6.500 2L10 6l-3.500 4" class="line" /></svg>
          <i class="bar"></i>
          <a href="#"><svg viewBox="0 0 16 16" width="16" height="16"><path d="M0 2.500h6l1.500 2H16V14H0z" fill="#e5a922" /><path d="M0 5h16v9H0z" fill="#fdd663" /></svg><span>All Bookmarks</span></a>
        </div>
      </nav>
    </header>

    <div class="viewport">
      <div class="page">
        <nav class="navbar" aria-label="Main">
          <a class="brand" href="#">
            <svg viewBox="0 0 20 20" width="20" height="20"><path d="M1 1h18v18H1zM1 7h18M1 13h18M12.500 1v18M8 1v18" fill="none" stroke="#d7e7ea" stroke-width="1.3" /></svg>PharmaEvents</a>
          <a v-for="l in navLinks" :key="l.t" class="link" href="#"><svg :viewBox="l.box" height="16"><path :d="l.d" fill="currentColor" fill-rule="evenodd" /></svg>{{ l.t }}</a>
          <button class="user"><span class="avatar">A</span>admin@pharmaevents.com<i class="caret"></i></button>
        </nav>

        <main>
          <div class="heading">
            <div>
              <h1>Event Dashboard</h1>
              <p>Overview and statistics of your events</p>
            </div>
            <button class="create"><svg viewBox="0 0 512 512" width="16" height="16"><path :d="plus.d" fill="currentColor" /></svg>Create New Event</button>
          </div>

          <section class="stats">
            <article v-for="s in stats" :key="s.t">
              <svg :viewBox="s.box" height="32"><path :d="s.d" :fill="s.c" fill-rule="evenodd" /></svg>
              <strong>{{ s.n }}</strong>
              <span>{{ s.t }}</span>
            </article>
          </section>

          <section class="filter">
            <h2>Filter Dashboard Data</h2>
            <form class="fields">
              <div class="search">
                <label for="q" aria-label="Search"><svg viewBox="0 0 512 512" width="16" height="16"><path fill="#dee2e6" stroke="#dee2e6" stroke-width="20" d="M416 208c0 45.9-14.9 88.3-40 122.7L502.6 457.4c12.5 12.5 12.5 32.8 0 45.3s-32.8 12.5-45.3 0L330.7 376c-34.4 25.2-76.8 40-122.7 40C93.1 416 0 322.9 0 208S93.1 0 208 0S416 93.1 416 208zM208 352a144 144 0 1 0 0-288 144 144 0 1 0 0 288z" /></svg></label>
                <input id="q" type="text" placeholder="Search events, locations, requesters..." />
              </div>
              <select v-for="f in filters" :id="f.id" :key="f.id" :aria-label="f.label"><option>{{ f.t }}</option></select>
            </form>
          </section>

          <section class="charts">
            <article>
              <h2><svg viewBox="0 0 576 512" height="16"><path fill="#fff" d="M304 240V16.6c0-9 7-16.6 16-16.6C443.7 0 544 100.3 544 224c0 9-7.6 16-16.6 16H304zM32 272C32 150.7 122.1 50.3 239 34.3c9.2-1.3 17 6.1 17 15.4V288L412.5 444.5c6.7 6.7 6.2 17.7-1.5 23.1C371.8 495.6 323.8 512 272 512C139.5 512 32 404.6 32 272zm526.4 16c9.3 0 16.6 7.8 15.4 17c-7.7 55.9-34.6 105.6-73.9 142.3c-6 5.6-15.4 5.2-21.2-.7L320 288H558.4z" /></svg>Events by Category</h2>
              <div class="body">
                <h3>Events by Category</h3>
                <svg class="donut" viewBox="0 0 270 270" width="270" height="270"><circle cx="135" cy="135" r="100.5" fill="none" stroke="#d45973" stroke-width="67" /><g fill="none" stroke="#f6eef0" stroke-width="1.5"><circle cx="135" cy="135" r="134" /><circle cx="135" cy="135" r="67" /><path d="M135 1v67" /></g></svg>
              </div>
            </article>
            <article class="raised">
              <h2><svg viewBox="0 0 512 512" height="16"><path fill="#fff" d="M32 32c17.7 0 32 14.3 32 32V400c0 8.8 7.2 16 16 16H480c17.7 0 32 14.3 32 32s-14.3 32-32 32H80c-44.2 0-80-35.8-80-80V64C0 46.3 14.3 32 32 32zm96 96c0-17.7 14.3-32 32-32l192 0c17.7 0 32 14.3 32 32s-14.3 32-32 32l-192 0c-17.7 0-32-14.3-32-32zm32 64H288c17.7 0 32 14.3 32 32s-14.3 32-32 32H160c-17.7 0-32-14.3-32-32s14.3-32 32-32zm0 96H416c17.7 0 32 14.3 32 32s-14.3 32-32 32H160c-17.7 0-32-14.3-32-32s14.3-32 32-32z" /></svg>Event Types Distribution</h2>
              <div class="body">
                <h3>Event Types Distribution</h3>
                <div class="plot">
                  <div class="row"><span>Online</span><i class="tick"></i><div class="cells"><i v-for="n in 10" :key="n"></i></div></div>
                  <div class="row"><span>Offline</span><i class="tick"></i><div class="cells"><i v-for="n in 10" :key="n"></i><b></b></div></div>
                </div>
              </div>
            </article>
          </section>
        </main>
      </div>
      <div class="scrollbar"><i class="up"></i><i class="thumb"></i><i class="down"></i></div>
    </div>

    <footer class="taskbar">
      <button class="start" aria-label="Start"><svg viewBox="0 0 16 16" width="16" height="16"><path d="M0 2.200L6.800 1.200v6.400H0zM7.600 1.100L16 0v7.600H7.600zM0 8.400h6.800v6.400L0 13.800zM7.600 8.400H16V16l-8.400-1.100z" fill="#fff" /></svg></button>
      <label class="find">
        <svg viewBox="0 0 18 18" width="18" height="18"><circle cx="11" cy="6.500" r="5.500" fill="none" stroke="#222" stroke-width="1.3" /><path d="M7 10.500l-6 6.500" stroke="#222" stroke-width="1.5" /></svg>
        <input type="text" placeholder="Type here to search" aria-label="Type here to search" />
        <svg viewBox="0 0 62 26" width="62" height="26"><path d="M24 1c1.200 8 4 10.500 11 12-7 1.500-9.800 4-11 12-1.200-8-4-10.500-11-12 7-1.500 9.800-4 11-12z" fill="#fcc21b" stroke="#fcc21b" stroke-width="1.5" /><path d="M47 11c.7 4 2 5.200 5.500 6-3.500.8-4.800 2-5.500 6-.7-4-2-5.200-5.500-6 3.500-.8 4.800-2 5.500-6z" fill="#fcc84a" /><path d="M5 17c.5 2.500 1.500 3.500 4.500 4-3 .5-4 1.500-4.500 4-.5-2.500-1.500-3.500-4.500-4 3-.5 4-1.500 4.500-4z" fill="#1e9be9" /><circle cx="41" cy="3" r="2.200" fill="#f0652f" /><circle cx="59" cy="23.500" r="2.200" fill="#8bc34a" /></svg>
      </label>
      <button class="view" aria-label="Task View"><svg viewBox="0 0 18 18" width="18" height="18"><path d="M1.500 5.500h9v7h-9zM1.500 1v2.500h9V1M1.500 17v-2.500h9V17M14.500 1v4M14.500 9v8" fill="none" stroke="#fff" stroke-width="1.3" /><rect x="13" y="5" width="3" height="3" fill="#fff" /></svg></button>
      <button v-for="a in apps" :key="a.name" class="app" :class="a.on" :aria-label="a.name"><svg viewBox="0 0 24 24" width="24" height="24" v-html="a.svg"></svg><span v-if="a.badge" class="badge">{{ a.badge }}</span></button>
      <div class="tray">
        <span class="weather"><svg viewBox="0 0 26 24" width="26" height="24"><path d="M16 8a8 8 0 0 1-12 9c3 6 14 6 17-2 1-3-1-6-5-7z" fill="#f79b2e" /><path d="M3 9a3 3 0 0 1 .5-5.500A4 4 0 0 1 11 3a3 3 0 0 1 1 6z" fill="#a9c9fb" /><path d="M14 22a3 3 0 0 1 0-5.500 4 4 0 0 1 7.500 0 2.800 2.800 0 0 1 1 5.500z" fill="#a9c9fb" /></svg><b>2</b></span>
        <span class="temp">21°C</span>
        <span class="sky" dir="rtl">غائم جزئيًا</span>
        <svg viewBox="0 0 12 12" width="12" height="12"><path d="M1 9l5-5 5 5" fill="none" stroke="#fff" stroke-width="1.3" /></svg>
        <svg viewBox="0 0 18 16" width="18" height="16"><path d="M1 5.500h2.500L7 2.500v11l-3.500-3H1zM9.500 5.500q1.500 2.500 0 5M12 4q2.500 4 0 8M14.500 2.500q3.500 5.500 0 11" fill="none" stroke="#fff" stroke-width="1.1" /></svg>
        <span class="lang">ENG</span>
        <time><span>11:11 PM</span><span>05/21/2025</span></time>
        <span class="notes"><svg viewBox="0 0 16 16" width="16" height="16"><path d="M0 0h16v12H8l-4 4v-4H0z" fill="#fff" /><path d="M3 3.500h10M3 6h10M3 8.500h7" stroke="#2d2928" stroke-width="1.2" /></svg><b>7</b></span>
      </div>
    </footer>
  </div>
</template>

<style>
body { margin: 0; }
</style>

<style scoped>
* { box-sizing: border-box; }
.desktop { height: 100vh; display: flex; flex-direction: column; overflow: hidden; font-family: "Roboto", "DejaVu Sans", sans-serif; }
button { border: 0; background: none; padding: 0; font: inherit; color: inherit; }
a { color: inherit; text-decoration: none; }
svg { display: block; flex: none; overflow: visible; }
h1, h2, h3, p { margin: 0; }

.browser { flex: none; background: #fff; border-bottom: 1px solid #dcdbe0; font-family: "Open Sans", "DejaVu Sans", sans-serif; font-size: 12px; color: #37373d; }
.line { fill: none; stroke: #5b5d66; stroke-width: 1.5; }
.faint { stroke: #c4c4ca; }
.bar { width: 2px; height: 16px; background: #dddce3; }

.tabs { display: flex; align-items: center; height: 40px; background: #e3e1e7; padding-left: 2px; }
.tab { width: 41px; height: 40px; flex: 0 1 41px; display: flex; align-items: center; justify-content: center; background: linear-gradient(#cbc9d0, #cbc9d0) right center / 1px 16px no-repeat; }
.tab.first { background: none; }
.tab svg { width: 24px; height: 24px; }
.ring { fill: none; stroke: #85858a; stroke-width: 1.5; stroke-dasharray: 32 2 4 2 4 2 4 2 4 2; transform: rotate(90deg); transform-origin: 12px 12px; }
.group { position: relative; display: flex; align-items: center; height: 40px; }
.group::after { content: ""; position: absolute; left: 2px; right: 6px; bottom: 0; height: 2px; background: #bc82ea; }
.chip { width: 33px; height: 32px; margin-right: 4px; border-radius: 8px; background: #d8c9ec; color: #a24be6; font-size: 13px; }
.active-tab { width: 36px; height: 32px; flex: none; border-radius: 8px; background: #fff; display: flex; align-items: center; justify-content: center; }
.new-tab { width: 40px; height: 32px; flex: none; display: flex; align-items: center; justify-content: center; }
.window-controls { display: flex; margin-left: auto; }
.window-controls button { width: 46px; height: 40px; display: flex; align-items: center; justify-content: center; }
.window-controls button:first-child { width: 36px; }

.toolbar { display: flex; align-items: center; height: 40px; padding: 0 9px 0 13px; }
.tool-left { display: flex; gap: 12px; flex: 0 1 375px; }
.save { margin-right: 14px; }
.address { flex: 0 1 1080px; height: 32px; border-radius: 10px; background: #eeedf2; display: flex; align-items: center; gap: 9px; padding: 0 10px 0 9px; }
.address input { flex: 1; min-width: 0; margin-left: 6px; border: 0; background: none; padding: 0; font: inherit; font-size: 13px; color: #3b3b42; outline: 0; }
.address .bar { width: 1px; height: 18px; background: #c6c5cc; }
.bat { margin-left: 7px; }
.extensions { margin-left: auto; display: flex; align-items: center; gap: 12px; }
.error { display: flex; align-items: center; gap: 3px; height: 28px; padding: 0 5px 0 7px; border: 1px solid #5d4c0b; border-radius: 8px; background: #f3f1ea; color: #4b3f10; font-size: 11px; }

.bookmarks { display: flex; align-items: center; height: 34px; padding: 0 14px 4px 12px; }
.bookmarks .ai { width: 30px; height: 20px; border: 1px solid #bc82ea; border-radius: 4px; background: #f0e3fd; color: #a24be6; font-size: 12px; line-height: 16px; }
.apps { margin: 0 14px 0 13px; }
.bookmarks > .bar { margin-right: 13px; }
.bookmarks > a { display: flex; align-items: center; gap: 6px; flex: 0 1 154px; padding-right: 17px; white-space: nowrap; }
.bookmarks > a.short { flex-basis: 94px; }
.bookmarks > a span { flex: 1; }
.bookmarks span { font-size: 11px; line-height: 18px; }
.bookmarks span[dir="rtl"] { font-size: 12px; }
.all { display: flex; align-items: center; gap: 14px; margin-left: auto; }
.all a { display: flex; gap: 6px; align-items: center; white-space: nowrap; }

.viewport { flex: 1; min-height: 0; display: flex; overflow: hidden; }
.page { flex: 1; min-width: 0; background: #f6f7f9; overflow: hidden; font-size: 16px; line-height: 24px; }
.navbar { position: relative; display: flex; align-items: center; height: 66px; padding: 0 25px 0 20px; background: #106e84; color: #dbe9ec; box-shadow: 0 2px 8px rgba(0, 0, 0, .12); font-weight: 500; }
.brand { display: flex; align-items: center; gap: 16px; margin-right: 24px; color: #fff; font-size: 20px; font-weight: 700; }
.link { display: flex; align-items: center; gap: 8px; margin-right: 16px; }
.user { display: flex; align-items: center; margin-left: auto; color: #f3f8f9; font-weight: 400; }
.avatar { width: 36px; height: 36px; margin-right: 8px; border-radius: 50%; background: linear-gradient(45deg, #6a11cb, #2575fc); color: #fff; font-weight: 700; line-height: 36px; text-align: center; }
.caret { margin-left: 4px; border: 4px solid transparent; border-top-color: currentColor; border-bottom: 0; }

main { padding: 24px 12px; }
.heading { display: flex; justify-content: space-between; align-items: flex-start; margin-bottom: 40px; }
h1 { font-size: 32px; line-height: 38px; font-weight: 500; color: #fff; }
.heading p { color: #c2c8cf; }
.create { display: flex; align-items: center; gap: 12px; height: 38px; padding: 0 13px; border-radius: 6px; background: #106e84; color: #fff; }

.stats { display: grid; grid-template-columns: repeat(4, 1fr); gap: 24px; margin-bottom: 48px; }
.stats article { display: flex; flex-direction: column; align-items: center; padding: 40px 16px 39px; border-radius: 8px; background: #353940; box-shadow: 0 2px 8px rgba(0, 0, 0, .08); }
.stats strong { margin: 24px 0 10px; font-size: 40px; line-height: 48px; font-weight: 700; color: #333; }
.stats span { font-size: 14px; letter-spacing: 1px; text-transform: uppercase; color: #6c757d; }

.filter { margin-bottom: 48px; border-radius: 8px; background: #2c2f34; box-shadow: 0 4px 12px rgba(0, 0, 0, .08); overflow: hidden; }
.filter h2 { height: 41px; padding: 0 16px; border-bottom: 1px solid #26292c; background: #2b2e32; font-size: 16px; line-height: 40px; font-weight: 500; color: #333; }
.fields { display: grid; grid-template-columns: calc((100% + 24px) / 3 - 24px) 1fr 1fr 1fr; gap: 24px; padding: 16px; }
.search { display: flex; height: 38px; border: 1px solid #495057; border-radius: 6px; background: #212429; overflow: hidden; }
.search label { width: 41px; display: flex; align-items: center; justify-content: center; border-right: 1px solid #495057; background: #2b3035; }
.search input { flex: 1; min-width: 0; padding: 0 12px; border: 0; background: none; font: inherit; color: #dee2e6; outline: 0; }
.search input::placeholder { color: #93979b; opacity: 1; }
select { appearance: none; height: 38px; min-width: 0; padding: 0 36px 0 12px; border: 1px solid #495057; border-radius: 6px; background: #212429 url("data:image/svg+xml,%3Csvg xmlns='http://www.w3.org/2000/svg' viewBox='0 0 16 16'%3E%3Cpath fill='none' stroke='%23b5b9bd' stroke-linecap='round' stroke-linejoin='round' stroke-width='2' d='m2 5 6 6 6-6'/%3E%3C/svg%3E") right 14px center / 12px 12px no-repeat; font: inherit; color: #dee2e6; }

.charts { display: grid; grid-template-columns: 1fr 1fr; gap: 24px; }
.charts article { border-radius: 6px; background: #2c2f34; box-shadow: 0 2px 8px rgba(0, 0, 0, .08); overflow: hidden; }
.charts .raised { transform: translateY(-3px); box-shadow: 0 8px 24px rgba(0, 0, 0, .16); }
.charts h2 { display: flex; align-items: center; gap: 12px; height: 41px; padding: 0 16px; border-bottom: 1px solid #0e6377; background: #106e84; color: #fff; font-size: 16px; font-weight: 700; }
.body { min-height: 440px; padding: 17px 16px 16px; }
.body h3 { font-family: "Liberation Sans", sans-serif; font-size: 16px; line-height: 38px; font-weight: 700; color: #666; text-align: center; }
.donut { margin: 0 auto; }
.plot { padding-right: 11px; font-family: "Liberation Sans", sans-serif; font-size: 12px; color: #666; }
.row { display: flex; align-items: center; height: 130px; }
.row span { width: 41px; padding-right: 3px; text-align: right; }
.tick { width: 7px; height: 130px; border-top: 1px solid #26292d; }
.cells { position: relative; flex: 1; height: 130px; display: flex; border-left: 1px solid #24272b; border-top: 1px solid #282b2f; }
.cells i { flex: 1; border-right: 1px solid #282b2f; }
.cells b { position: absolute; left: 0; right: 0; top: 17px; height: 94px; background: #338cc7; border: 1px solid #2f7fb4; border-left: 0; }

.scrollbar { width: 15px; flex: none; display: flex; flex-direction: column; align-items: center; padding: 4px 0 7px; background: #fcfcfc; }
.scrollbar .up { border: 5px solid transparent; border-top: 0; border-bottom: 6px solid #85858a; }
.scrollbar .down { margin-top: auto; border: 5px solid transparent; border-bottom: 0; border-top: 6px solid #85858a; }
.thumb { width: 9px; height: 39%; margin-top: 7px; border-radius: 5px; background: #8b8b8b; }

.taskbar { flex: none; display: flex; height: 40px; color: #fff; background: linear-gradient(90deg, #242424 0%, #2a2826 28%, #3a302c 42%, #38302c 52%, #232325 62%, #222122 72%, #332d2a 82%, #2e2827 100%); font-family: "Open Sans", "DejaVu Sans", sans-serif; font-size: 12px; }
.taskbar button { display: flex; align-items: center; justify-content: center; }
.start { width: 48px; }
.find { width: 288px; display: flex; align-items: center; padding: 0 9px 0 12px; background: #f1f1f1; border: 1px solid #bbb; color: #333; }
.find input { flex: 1; min-width: 0; margin-left: 9px; padding: 0; border: 0; background: none; font: inherit; font-size: 14px; outline: 0; }
.find input::placeholder { color: #333; opacity: 1; }
.view { width: 50px; }
.app { position: relative; width: 49px; flex: 0 1 49px; }
.app.full { background: #505050; box-shadow: inset 0 -2px #76b9ed; }
.app.part { background: linear-gradient(#76b9ed, #76b9ed) center bottom / 40px 2px no-repeat; }
.badge { position: absolute; right: 2px; bottom: 5px; min-width: 20px; height: 19px; border: 1px solid #777; border-radius: 10px; background: #252525; font-size: 12px; line-height: 17px; font-weight: 600; }
.tray { display: flex; align-items: center; margin-left: auto; margin-right: 5px; padding-right: 19px; border-right: 1px solid #777; white-space: nowrap; }
.weather { position: relative; }
.weather b { position: absolute; right: 0; top: 0; width: 12px; height: 12px; border-radius: 50%; background: #c92a20; font-size: 9px; line-height: 12px; text-align: center; }
.temp { margin: 0 9px 0 7px; font-size: 13px; }
.sky { margin-right: 25px; font-size: 13px; }
.tray > svg + svg { margin: 0 9px; }
.tray time { display: flex; flex-direction: column; align-items: center; margin: 0 19px 0 11px; font-size: 11px; line-height: 18px; }
.notes { position: relative; }
.notes b { position: absolute; left: 7px; top: 7px; width: 17px; height: 17px; border: 1px solid #999; border-radius: 50%; background: #2d2928; font-size: 11px; line-height: 15px; text-align: center; }
</style>
